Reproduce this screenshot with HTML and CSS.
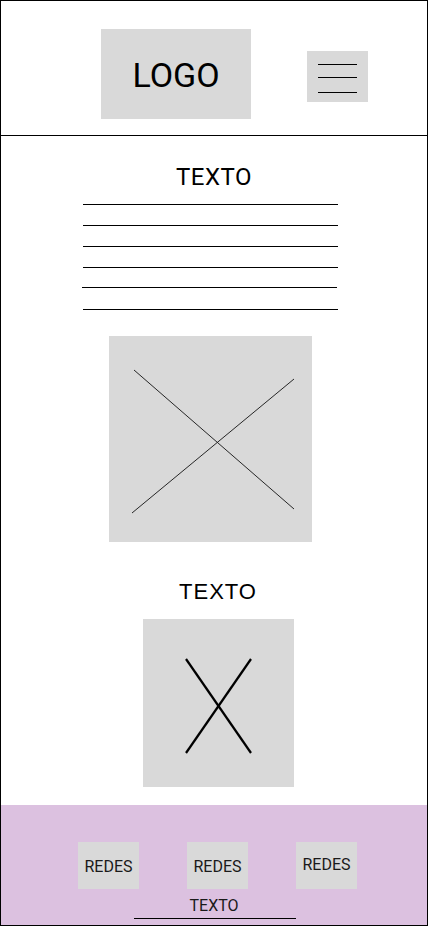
FILE: index.html
```html
<!DOCTYPE html>
<html lang="pt-BR">
<head>
<meta charset="utf-8" />
<meta name="viewport" content="width=device-width, initial-scale=1" />
<title>Wireframe</title>
<link rel="stylesheet" href="styles.css">
</head>
<body>

<div class="page">
  <header class="top">
    <div class="logo">LOGO</div>
    <div class="menu" role="button" aria-label="Menu">
      <span class="bar"></span>
      <span class="bar"></span>
      <span class="bar"></span>
    </div>
  </header>

  <main class="content">
    <h2 class="title">TEXTO</h2>
    <div class="rules">
      <span></span><span></span><span></span>
      <span></span><span class="rule-up"></span><span></span>
    </div>

    <div class="figure figure-wide">
      <svg width="203" height="206" viewBox="0 0 203 206">
        <line x1="25" y1="34" x2="185" y2="173" />
        <line x1="23" y1="177" x2="185" y2="43" />
      </svg>
    </div>

    <h2 class="title title-alt">TEXTO</h2>
    <div class="figure figure-small">
      <svg width="151" height="168" viewBox="0 0 151 168">
        <line x1="43" y1="40" x2="108" y2="134" />
        <line x1="43" y1="134" x2="108" y2="40" />
      </svg>
    </div>
  </main>

  <footer class="foot">
    <div class="socials">
      <div class="social">REDES</div>
      <div class="social">REDES</div>
      <div class="social social-up">REDES</div>
    </div>
    <p class="foot-text">TEXTO</p>
    <div class="foot-rule"></div>
  </footer>
</div>

</body>
</html>
```

FILE: styles.css
```css
:root {
  --box: #d9d9d9;
  --line: #000000;
  --foot: #dcc1e0;
}
*{box-sizing:border-box;margin:0;padding:0;}
body{
  font-family:Roboto,"Liberation Sans",Arial,sans-serif;
  color:#000;
  background:#fff;
}
.page{
  width:428px;
  height:926px;
  border:1px solid var(--line);
  display:flex;
  flex-direction:column;
}

/* header */
.top{
  height:135px;
  flex-shrink:0;
  border-bottom:1px solid var(--line);
  display:flex;
  align-items:flex-start;
  gap:56px;
  padding:28px 0 0 100px;
}
.logo{
  width:150px;
  height:90px;
  background:var(--box);
  display:flex;
  align-items:center;
  justify-content:center;
  font-size:34px;
  padding-top:2px;
}
.menu{
  width:61px;
  height:51px;
  margin-top:22px;
  background:var(--box);
  padding:13px 0 0 11px;
  cursor:pointer;
}
.bar{display:block;width:39px;height:1px;background:var(--line);margin-bottom:12px;}
.bar:nth-child(2){margin-bottom:14px;}

/* main */
.content{
  flex:1;
  display:flex;
  flex-direction:column;
  padding-top:27px;
}
.title{
  font-size:24px;
  line-height:28px;
  font-weight:400;
  text-align:center;
  letter-spacing:0.5px;
}
.title-alt{
  margin-top:36px;
  font-family:"Liberation Sans",Arial,sans-serif;
  font-size:22px;
  letter-spacing:1px;
  padding-left:8px;
}
.rules{
  width:255px;
  margin:13px 0 0 82px;
  display:flex;
  flex-direction:column;
  gap:20px;
}
.rules span{display:block;height:1px;background:var(--line);}
.rules .rule-up{transform:translate(-1px,-1px);}
.figure{background:var(--box);}
.figure svg{display:block;}
.figure-wide{width:203px;height:206px;margin:26px 0 0 108px;}
.figure-wide line{stroke:#262626;stroke-width:1;}
.figure-small{width:151px;height:168px;margin:13px 0 0 142px;}
.figure-small line{stroke:#000;stroke-width:2.2;}

/* footer */
.foot{
  height:120px;
  flex-shrink:0;
  background:var(--foot);
  padding-top:37px;
}
.socials{
  display:flex;
  gap:48px;
  padding-left:77px;
}
.social{
  width:61px;
  height:47px;
  background:var(--box);
  display:flex;
  align-items:center;
  justify-content:center;
  font-size:16px;
  color:#1a1a1a;
  padding-top:2px;
}
.social-up{padding-top:0;padding-bottom:2px;}
.foot-text{
  margin-top:7px;
  font-size:16px;
  line-height:19px;
  text-align:center;
  color:#1a1a1a;
}
.foot-rule{
  width:162px;
  height:1px;
  background:var(--line);
  margin:3px 0 0 133px;
}
```
